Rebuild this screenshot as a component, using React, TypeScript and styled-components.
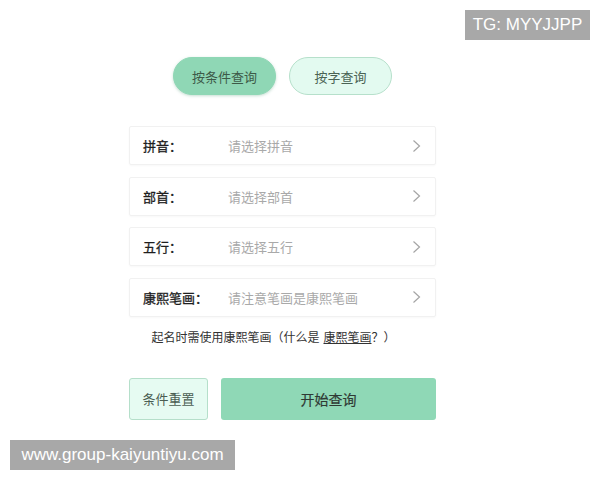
import React from "react";
import styled, { createGlobalStyle } from "styled-components";

const Global = createGlobalStyle`
  html, body {
    margin: 0;
    padding: 0;
    background: #ffffff;
  }
  body {
    font-family: "Noto Sans CJK SC", "Noto Sans", sans-serif;
  }
`;

const Page = styled.div`
  position: relative;
  width: 600px;
  height: 480px;
  overflow: hidden;
`;

const Column = styled.div`
  width: 307px;
  margin-left: 129px;
  padding-top: 57px;
  display: flex;
  flex-direction: column;
`;

const Tabs = styled.div`
  display: flex;
  justify-content: center;
  gap: 13px;
  margin-bottom: 31px;
`;

const Tab = styled.div<{ $active?: boolean }>`
  width: 103px;
  height: 38px;
  box-sizing: border-box;
  border-radius: 19px;
  display: flex;
  align-items: center;
  justify-content: center;
  font-size: 13px;
  color: ${(p) => (p.$active ? "#3d5a48" : "#4a6354")};
  background: ${(p) => (p.$active ? "#8fd7b5" : "#e3faf0")};
  border: 1px solid ${(p) => (p.$active ? "#8fd7b5" : "#b6e0cb")};
  box-shadow: ${(p) => (p.$active ? "0 1px 3px rgba(90, 160, 125, 0.35)" : "none")};
`;

const Rows = styled.div`
  display: flex;
  flex-direction: column;
  gap: 11.5px;
`;

const Row = styled.div`
  height: 39px;
  box-sizing: border-box;
  border: 1px solid #f1f1f1;
  border-radius: 2px;
  display: flex;
  align-items: center;
  padding: 0 14px 0 13px;
  box-shadow: 0 1px 2px rgba(0, 0, 0, 0.03);
`;

const Label = styled.span`
  width: 85px;
  font-size: 13px;
  color: #1e1e1e;
  -webkit-text-stroke: 0.3px #1e1e1e;
`;

const Placeholder = styled.span`
  flex: 1;
  font-size: 13px;
  color: #a9a9a9;
`;

const Chevron = () => (
  <svg width="9" height="14" viewBox="0 0 9 14">
    <polyline
      points="1.5,1.5 7.5,7 1.5,12.5"
      fill="none"
      stroke="#a5a5a5"
      strokeWidth="1.2"
    />
  </svg>
);

const Note = styled.div`
  margin-top: 12px;
  text-align: center;
  font-size: 12px;
  line-height: 16px;
  color: #333333;
  padding-right: 18px;
`;

const NoteLink = styled.span`
  text-decoration: underline;
  margin-left: 4px;
`;

const Actions = styled.div`
  margin-top: 33px;
  display: flex;
  gap: 13px;
`;

const ResetButton = styled.div`
  width: 79px;
  height: 42px;
  box-sizing: border-box;
  border: 1px solid #b5dfca;
  border-radius: 3px;
  background: #e6fbf2;
  display: flex;
  align-items: center;
  justify-content: center;
  font-size: 13px;
  color: #4a5e52;
`;

const StartButton = styled.div`
  flex: 1;
  height: 42px;
  border-radius: 3px;
  background: #8fd8b6;
  display: flex;
  align-items: center;
  justify-content: center;
  font-size: 14px;
  color: #2f3a34;
  -webkit-text-stroke: 0.2px #2f3a34;
`;

const Watermark = styled.div<{ $top?: number; $left?: number; $w: number }>`
  position: absolute;
  top: ${(p) => p.$top}px;
  left: ${(p) => p.$left}px;
  width: ${(p) => p.$w}px;
  height: 30px;
  background: #a8a8a8;
  color: #ffffff;
  font-family: "Liberation Sans", Arial, sans-serif;
  font-size: 17px;
  display: flex;
  align-items: center;
  justify-content: center;
`;

const fields = [
  { label: "拼音：", hint: "请选择拼音" },
  { label: "部首：", hint: "请选择部首" },
  { label: "五行：", hint: "请选择五行" },
  { label: "康熙笔画：", hint: "请注意笔画是康熙笔画" },
];

export default function App() {
  return (
    <Page>
      <Global />
      <Column>
        <Tabs>
          <Tab $active>按条件查询</Tab>
          <Tab>按字查询</Tab>
        </Tabs>
        <Rows>
          {fields.map((f) => (
            <Row key={f.label}>
              <Label>{f.label}</Label>
              <Placeholder>{f.hint}</Placeholder>
              <Chevron />
            </Row>
          ))}
        </Rows>
        <Note>
          起名时需使用康熙笔画（什么是<NoteLink>康熙笔画</NoteLink>？）
        </Note>
        <Actions>
          <ResetButton>条件重置</ResetButton>
          <StartButton>开始查询</StartButton>
        </Actions>
      </Column>
      <Watermark $top={10} $left={465} $w={125}>TG: MYYJJPP</Watermark>
      <Watermark $top={440} $left={10} $w={225}>www.group-kaiyuntiyu.com</Watermark>
    </Page>
  );
}
